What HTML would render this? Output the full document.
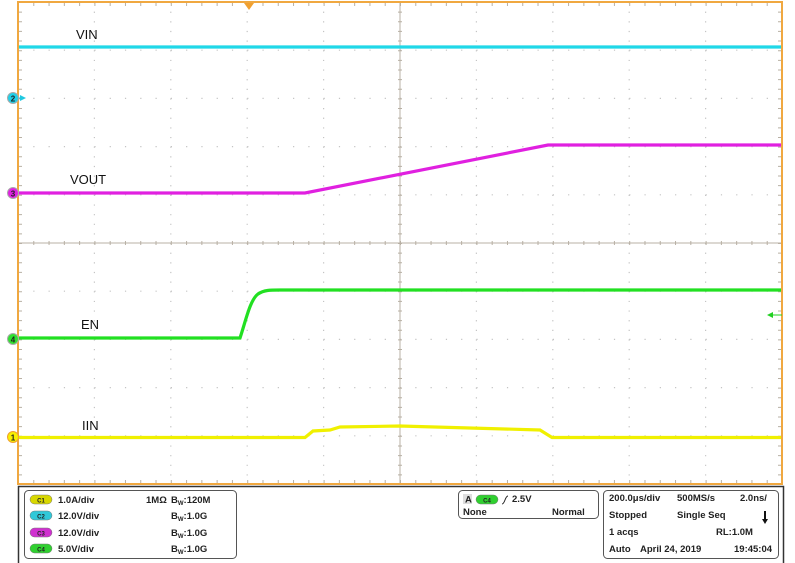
<!DOCTYPE html>
<html><head><meta charset="utf-8"><style>
html,body{margin:0;padding:0;background:#fff;width:795px;height:563px;overflow:hidden;font-family:"Liberation Sans",Arial,sans-serif}
</style></head><body>
<svg width="795" height="563" viewBox="0 0 795 563" xmlns="http://www.w3.org/2000/svg" style="position:absolute;left:0;top:0">
<g stroke="#c4c4c4" stroke-width="1.2" stroke-dasharray="1.2 8.44">
<line x1="94.4" y1="2" x2="94.4" y2="484"/><line x1="170.8" y1="2" x2="170.8" y2="484"/><line x1="247.2" y1="2" x2="247.2" y2="484"/><line x1="323.6" y1="2" x2="323.6" y2="484"/>
<line x1="476.4" y1="2" x2="476.4" y2="484"/><line x1="552.8" y1="2" x2="552.8" y2="484"/><line x1="629.2" y1="2" x2="629.2" y2="484"/><line x1="705.6" y1="2" x2="705.6" y2="484"/>
</g>
<g stroke="#c4c4c4" stroke-width="1.2" stroke-dasharray="1.2 14.08">
<line x1="18" y1="50.2" x2="782" y2="50.2"/><line x1="18" y1="98.4" x2="782" y2="98.4"/><line x1="18" y1="146.6" x2="782" y2="146.6"/><line x1="18" y1="194.8" x2="782" y2="194.8"/>
<line x1="18" y1="291.2" x2="782" y2="291.2"/><line x1="18" y1="339.4" x2="782" y2="339.4"/><line x1="18" y1="387.6" x2="782" y2="387.6"/><line x1="18" y1="435.8" x2="782" y2="435.8"/>
</g>
<g stroke="#b8b0a4" stroke-width="1">
<line x1="400" y1="2" x2="400" y2="484"/><line x1="18" y1="243" x2="782" y2="243"/>
</g>
<g stroke="#b8b0a4" stroke-width="4" stroke-dasharray="1 8.64" fill="none">
<line x1="400" y1="2" x2="400" y2="484"/>
<line x1="780" y1="2" x2="780" y2="484"/>
<line x1="20" y1="2" x2="20" y2="484"/>
</g>
<g stroke="#b8b0a4" stroke-width="4" stroke-dasharray="1 14.28" fill="none">
<line x1="18" y1="243" x2="782" y2="243"/>
<line x1="18" y1="4" x2="782" y2="4"/>
<line x1="18" y1="482" x2="782" y2="482"/>
</g>
<rect x="18" y="2" width="764" height="482" fill="none" stroke="#f0a840" stroke-width="2"/>
<polygon points="244,3 254,3 249,10" fill="#f0a030"/>
<line x1="19" y1="47" x2="781" y2="47" stroke="#20d8e8" stroke-width="3.2"/>
<polyline points="19,193 305,193 548,145 781,145" fill="none" stroke="#e020e0" stroke-width="3.2"/>
<path d="M19,338 L240,338 C246,320 250,300 258,294 C264,290 270,290 280,290 L781,290" fill="none" stroke="#22e022" stroke-width="3.2"/>
<polyline points="19,437.5 305,437.5 313,431 330,430 340,427 400,426 540,430 552,437.5 781,437.5" fill="none" stroke="#f0f000" stroke-width="3.2"/>
<polygon points="26,98 20,95 20,101" fill="#20c8e0"/>
<line x1="18" y1="98" x2="23" y2="98" stroke="#20c8e0"/>
<circle cx="13" cy="98" r="5.5" fill="#20d0e8" stroke="#aaa"/><text x="13" y="101.5" font-size="8" text-anchor="middle" font-weight="bold" fill="#222">2</text>
<circle cx="13" cy="193" r="5.5" fill="#e020e0" stroke="#aaa"/><text x="13" y="196.5" font-size="8" text-anchor="middle" font-weight="bold" fill="#222">3</text>
<circle cx="13" cy="339" r="5.5" fill="#30e030" stroke="#aaa"/><text x="13" y="342.5" font-size="8" text-anchor="middle" font-weight="bold" fill="#222">4</text>
<circle cx="13" cy="437" r="5.5" fill="#f8f000" stroke="#f0a030"/><text x="13" y="440.5" font-size="8" text-anchor="middle" font-weight="bold" fill="#222">1</text>
<polygon points="767,315 773,312 773,318" fill="#22d022"/><line x1="770" y1="315" x2="782" y2="315" stroke="#22d022"/>
<g font-size="13" fill="#111">
<text x="76" y="39">VIN</text><text x="70" y="184">VOUT</text><text x="81" y="329">EN</text><text x="82" y="430">IIN</text>
</g>
<rect x="18.5" y="486.5" width="765" height="78" fill="#fff" stroke="#333" stroke-width="1.5"/>
<rect x="24.5" y="490.5" width="212" height="68" rx="4" fill="#fff" stroke="#555"/>
<rect x="458.5" y="490.5" width="140" height="28" rx="4" fill="#fff" stroke="#555"/>
<rect x="603.5" y="490.5" width="175" height="68" rx="4" fill="#fff" stroke="#555"/>
<g font-size="9.5" font-weight="bold" fill="#222">
<rect x="30" y="495" width="22" height="9" rx="4.5" fill="#d8d800" stroke="#777" stroke-width=".5"/><text x="41" y="502.5" font-size="6" text-anchor="middle">C1</text>
<rect x="30" y="511" width="22" height="9" rx="4.5" fill="#30c8d8" stroke="#777" stroke-width=".5"/><text x="41" y="518.5" font-size="6" text-anchor="middle">C2</text>
<rect x="30" y="528" width="22" height="9" rx="4.5" fill="#d030d0" stroke="#777" stroke-width=".5"/><text x="41" y="535.5" font-size="6" text-anchor="middle">C3</text>
<rect x="30" y="544" width="22" height="9" rx="4.5" fill="#30d030" stroke="#777" stroke-width=".5"/><text x="41" y="551.5" font-size="6" text-anchor="middle">C4</text>
<text x="58" y="503">1.0A/div</text><text x="58" y="519">12.0V/div</text><text x="58" y="536">12.0V/div</text><text x="58" y="552">5.0V/div</text>
<text x="146" y="503">1MΩ</text>
<text x="171" y="503">B<tspan font-size="6" dy="2">W</tspan><tspan dy="-2">:120M</tspan></text>
<text x="171" y="519">B<tspan font-size="6" dy="2">W</tspan><tspan dy="-2">:1.0G</tspan></text>
<text x="171" y="536">B<tspan font-size="6" dy="2">W</tspan><tspan dy="-2">:1.0G</tspan></text>
<text x="171" y="552">B<tspan font-size="6" dy="2">W</tspan><tspan dy="-2">:1.0G</tspan></text>
<rect x="463" y="494" width="9" height="10" fill="#ddd"/><text x="465" y="502.5">A</text>
<rect x="476" y="495" width="22" height="9" rx="4.5" fill="#30d030" stroke="#777" stroke-width=".5"/><text x="487" y="502.5" font-size="6" text-anchor="middle">C4</text>
<path d="M502,504 C505,504 505,496 508,496" fill="none" stroke="#222" stroke-width="1"/>
<text x="512" y="502">2.5V</text>
<text x="463" y="515">None</text><text x="552" y="515">Normal</text>
<text x="609" y="501">200.0μs/div</text><text x="677" y="501">500MS/s</text><text x="740" y="501">2.0ns/</text>
<text x="609" y="518">Stopped</text><text x="677" y="518">Single Seq</text>
<text x="609" y="535">1 acqs</text><text x="716" y="535">RL:1.0M</text>
<text x="609" y="552">Auto</text><text x="640" y="552">April 24, 2019</text><text x="734" y="552">19:45:04</text>
</g>
<line x1="765" y1="511" x2="765" y2="520" stroke="#111" stroke-width="2"/>
<polygon points="762,519 768,519 765,524" fill="#111"/>
</svg>
</body></html>
